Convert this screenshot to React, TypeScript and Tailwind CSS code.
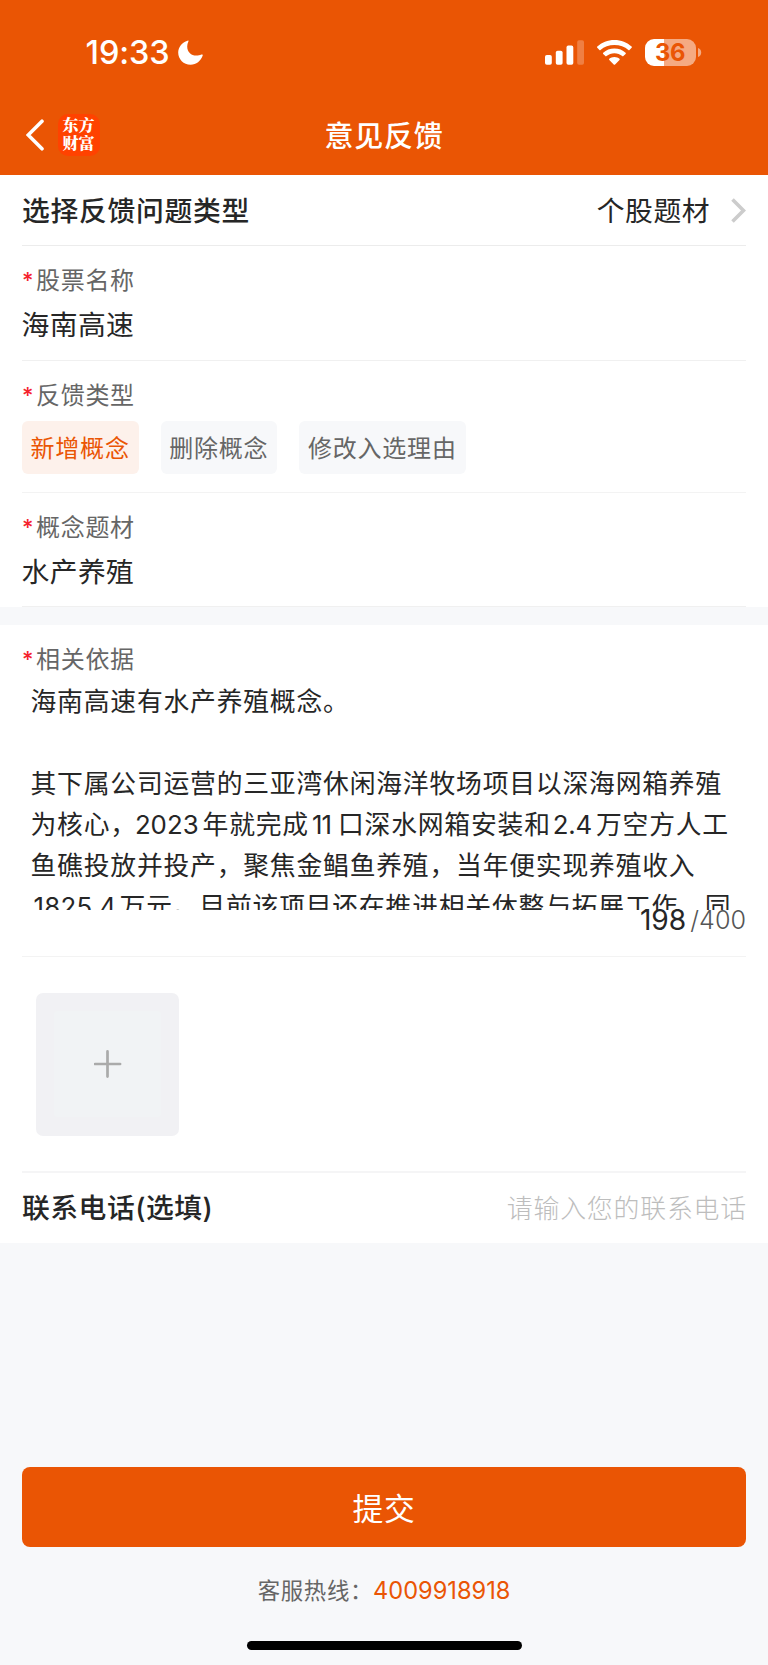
import React from "react";

function StatusBar() {
  return (
    <div className="flex h-[104px] items-center justify-between pl-[85.5px] pr-[66.5px]">
      <div className="flex items-center gap-[7px]">
        <span className="w-[85px] whitespace-nowrap pt-[2px] text-[32.5px] leading-[40px] font-[550] tracking-[-0.1px]">19:33</span>
        <svg width="25" height="25" viewBox="0 0 25 25" fill="#fff">
          <path d="M9.6 .7C10.3.4 10.8.9 10.4 1.6C9.6 3.2 9.2 4.8 9.2 6.5C9.2 12 13 15.6 18.4 15.6C20.3 15.6 21.8 15.3 23.4 14.6C24.3 14.2 25 14.7 24.7 15.5C22.8 21 18.3 24.8 12.6 24.8C5.6 24.8.2 19.4.2 12.6C.2 7.1 4 2.5 9.6.7Z" />
        </svg>
      </div>
      <div className="flex items-center">
        <svg width="39" height="25" viewBox="0 0 39 25" fill="#fff" className="mr-[13px]">
          <rect x="0" y="15" width="6.8" height="9.8" rx="1.8" />
          <rect x="10.8" y="10.8" width="6.8" height="14" rx="1.8" />
          <rect x="21.5" y="5.6" width="6.8" height="19.2" rx="1.8" />
          <rect x="32.2" y=".3" width="6.8" height="24.5" rx="1.8" opacity=".25" />
        </svg>
        <svg width="35" height="25" viewBox="0 0 35 25" fill="#fff" className="mr-[13px]">
          <path d="M17.4 0C24.1 0 30.2 2.5 34.6 6.6C35 7 35 7.4 34.6 7.8L32.5 9.9C32.1 10.2 31.7 10.2 31.4 9.9C27.7 6.5 22.8 4.9 17.4 4.9S7.2 6.5 3.5 9.9C3.2 10.2 2.8 10.2 2.4 9.9L.3 7.8C-.1 7.4-.1 7 .3 6.6C4.7 2.5 10.7 0 17.4 0Z" />
          <path d="M17.4 8.6C21.8 8.6 25.7 10.1 28.6 12.8C29 13.1 29 13.6 28.6 14L26.4 16.1C26.1 16.5 25.7 16.5 25.3 16.1C23.1 14.2 20.4 13.2 17.4 13.2S11.7 14.2 9.5 16.1C9.1 16.5 8.7 16.5 8.4 16.1L6.2 14C5.8 13.6 5.8 13.1 6.2 12.8C9.1 10.1 13 8.6 17.4 8.6Z" />
          <path d="M17.4 16.9C19.4 16.9 21.2 17.6 22.5 18.7C22.9 19.1 22.9 19.5 22.5 19.9L18.1 24.4C17.6 24.9 17.2 24.9 16.7 24.4L12.3 19.9C11.9 19.5 11.9 19.1 12.3 18.7C13.6 17.6 15.4 16.9 17.4 16.9Z" />
        </svg>
        <div className="flex h-[27px] w-[51px] items-center justify-center rounded-[9px] bg-[linear-gradient(90deg,#fff_37%,#f5aa82_37%)] pt-[1px] text-[23.8px] leading-none font-bold tracking-[-0.4px] text-[#ea5504]">
          <span>36</span>
        </div>
        <svg width="5" height="9" viewBox="0 0 5 9" className="ml-[1px]">
          <path d="M1 0C3.2.8 4.2 2.5 4.2 4.5S3.2 8.2 1 9Z" fill="#f5aa82" />
        </svg>
      </div>
    </div>
  );
}

function NavBar() {
  return (
    <div className="grid h-[62px] grid-cols-[1fr_auto_1fr] items-center pl-[26px] pr-[26px]">
      <div className="flex items-center">
        <svg width="18" height="32" viewBox="0 0 18 32" fill="none" stroke="#fff" strokeWidth="3.6" strokeLinecap="round">
          <path d="M16 2.2L2.2 16L16 29.8" />
        </svg>
        <div className="ml-[13.5px] flex h-[42px] w-[42px] flex-col items-center justify-center rounded-[10px] bg-[#ff4200] pb-[2px] font-['Noto_Serif_CJK_SC','Noto_Sans_CJK_SC',serif] text-[16px] leading-[18px] font-black">
          <span>东方</span>
          <span>财富</span>
        </div>
      </div>
      <h1 className="pt-[4px] text-[29px] leading-[40px] font-medium tracking-[0.7px]">意见反馈</h1>
      <span />
    </div>
  );
}

function Label({ children }: { children: React.ReactNode }) {
  return (
    <div className="flex h-[36px] items-center text-[24px] leading-[36px] tracking-[0.7px] text-[#666]">
      <span className="w-[14px] text-[22px] font-medium tracking-normal text-[#f5222d]">*</span>
      <span className="pt-[2px]">{children}</span>
    </div>
  );
}

function Field({ label, value }: { label: string; value: string }) {
  return (
    <div className="h-full border-b border-[#f0f0f0] pt-[16px]">
      <Label>{label}</Label>
      <div className="mt-[7px] -ml-[0.5px] text-[27.8px] leading-[40px] tracking-[0.4px]">{value}</div>
    </div>
  );
}

function Chip({ active, children }: { active?: boolean; children: React.ReactNode }) {
  return (
    <button
      className={
        active
          ? "h-[53px] rounded-[6px] bg-[#fdf1eb] pt-[2px] pr-[9px] pl-[8.5px] text-[24px] leading-[51px] tracking-[0.8px] text-[#ea5504]"
          : "h-[53px] rounded-[6px] bg-[#f7f8fa] pt-[2px] pr-[9px] pl-[8.5px] text-[24px] leading-[51px] tracking-[0.8px] text-[#666]"
      }
    >
      {children}
    </button>
  );
}

export default function App() {
  return (
    <div className="flex h-[1665px] w-[768px] flex-col overflow-hidden bg-[#f7f8fa] font-['Inter','Noto_Sans_CJK_SC',sans-serif] text-[#262626]">
      <header className="h-[174.5px] shrink-0 bg-[#ea5504] text-white">
        <StatusBar />
        <NavBar />
      </header>

      <section className="h-[432.5px] shrink-0 bg-white px-[22px]">
        <div className="flex h-[71px] items-center border-b border-[#ececec] text-[27.8px] tracking-[0.7px]">
          <span className="flex-1 pt-[5px] font-medium">选择反馈问题类型</span>
          <span className="pt-[5px] tracking-[0.5px]">个股题材</span>
          <svg width="15" height="25" viewBox="0 0 15 25" fill="none" stroke="#ccc" strokeWidth="3.6" className="mt-[2px] ml-[21px]">
            <path d="M1.5 1.5L12.5 12.5L1.5 23.5" />
          </svg>
        </div>
        <div className="h-[115px]">
          <Field label="股票名称" value="海南高速" />
        </div>
        <div className="h-[132px] border-b border-[#f3f3f3] pt-[16px]">
          <Label>反馈类型</Label>
          <div className="mt-[8px] flex gap-[22px]">
            <Chip active>新增概念</Chip>
            <Chip>删除概念</Chip>
            <Chip>修改入选理由</Chip>
          </div>
        </div>
        <div className="h-[114px]">
          <Field label="概念题材" value="水产养殖" />
        </div>
      </section>

      <section className="mt-[17.5px] h-[618.5px] shrink-0 bg-white px-[22px] pt-[16px]">
        <div className="h-[316px] border-b border-[#f3f3f3]">
          <Label>相关依据</Label>
          <div className="mt-[4px] h-[229px] overflow-hidden pl-[8.5px] text-[25.8px] leading-[41px] tracking-[0.8px] whitespace-nowrap">
            <p>海南高速有水产养殖概念。</p>
            <p className="h-[41px]" />
            <p>其下属公司运营的三亚湾休闲海洋牧场项目以深海网箱养殖</p>
            <p>
              为核心，<span className="mr-[4px] -ml-[2px] tracking-normal">2023</span>年就完成
              <span className="mr-[7px] ml-[3px] tracking-[-1px]">11</span>口深水网箱安装和
              <span className="mr-[4px] ml-[2px] tracking-[-0.2px]">2.4</span>万空方人工
            </p>
            <p>鱼礁投放并投产，聚焦金鲳鱼养殖，当年便实现养殖收入</p>
            <p>
              <span className="mr-[3px] ml-[3px] tracking-[0.3px]">1825.4</span>万元。目前该项目还在推进相关休整与拓展工作，同
            </p>
          </div>
          <div className="-mt-[7px] flex h-[34px] items-center justify-end leading-[34px]">
            <span className="mr-[4px] text-[28.2px]">198</span>
            <span className="text-[25.2px] font-light text-[#555]">/400</span>
          </div>
        </div>
        <div className="h-[216px] border-b-2 border-[#f5f5f6] pt-[36px] pl-[14px]">
          <button className="flex h-[143px] w-[143px] items-center justify-center rounded-[7px] bg-[#f1f1f4]">
            <span className="flex h-[106px] w-[107px] items-center justify-center rounded-[3px] bg-[#f1f3f5]">
              <svg width="28" height="28" viewBox="0 0 28 28" stroke="#aaa" strokeWidth="2.7" strokeLinecap="round">
                <path d="M13.5 1.4V26.6M1.1 14H26.1" />
              </svg>
            </span>
          </button>
        </div>
        <div className="flex h-[70px] items-center pt-[2px]">
          <span className="flex-1 text-[27.8px] font-medium tracking-[0.5px]">联系电话(选填)</span>
          <span className="-mr-[1px] pt-[1px] text-[25.9px] font-light tracking-[0.8px] text-[#bdbdbd]">请输入您的联系电话</span>
        </div>
      </section>

      <footer className="mt-[224px] flex flex-col items-center px-[22px]">
        <button className="h-[80px] w-full rounded-[8px] bg-[#ea5504] pt-[3px] text-[30.8px] leading-[77px] tracking-[0.8px] text-white">提交</button>
        <p className="mt-[24px] flex h-[40px] items-center whitespace-nowrap text-[22.4px] leading-[40px] text-[#666]">
          <span className="tracking-[0.7px]">客服热线：</span>
          <span className="text-[23.6px] text-[#ea5504]">4009918918</span>
        </p>
        <div className="mt-[30px] h-[9px] w-[275px] rounded-full bg-black" />
      </footer>
    </div>
  );
}
